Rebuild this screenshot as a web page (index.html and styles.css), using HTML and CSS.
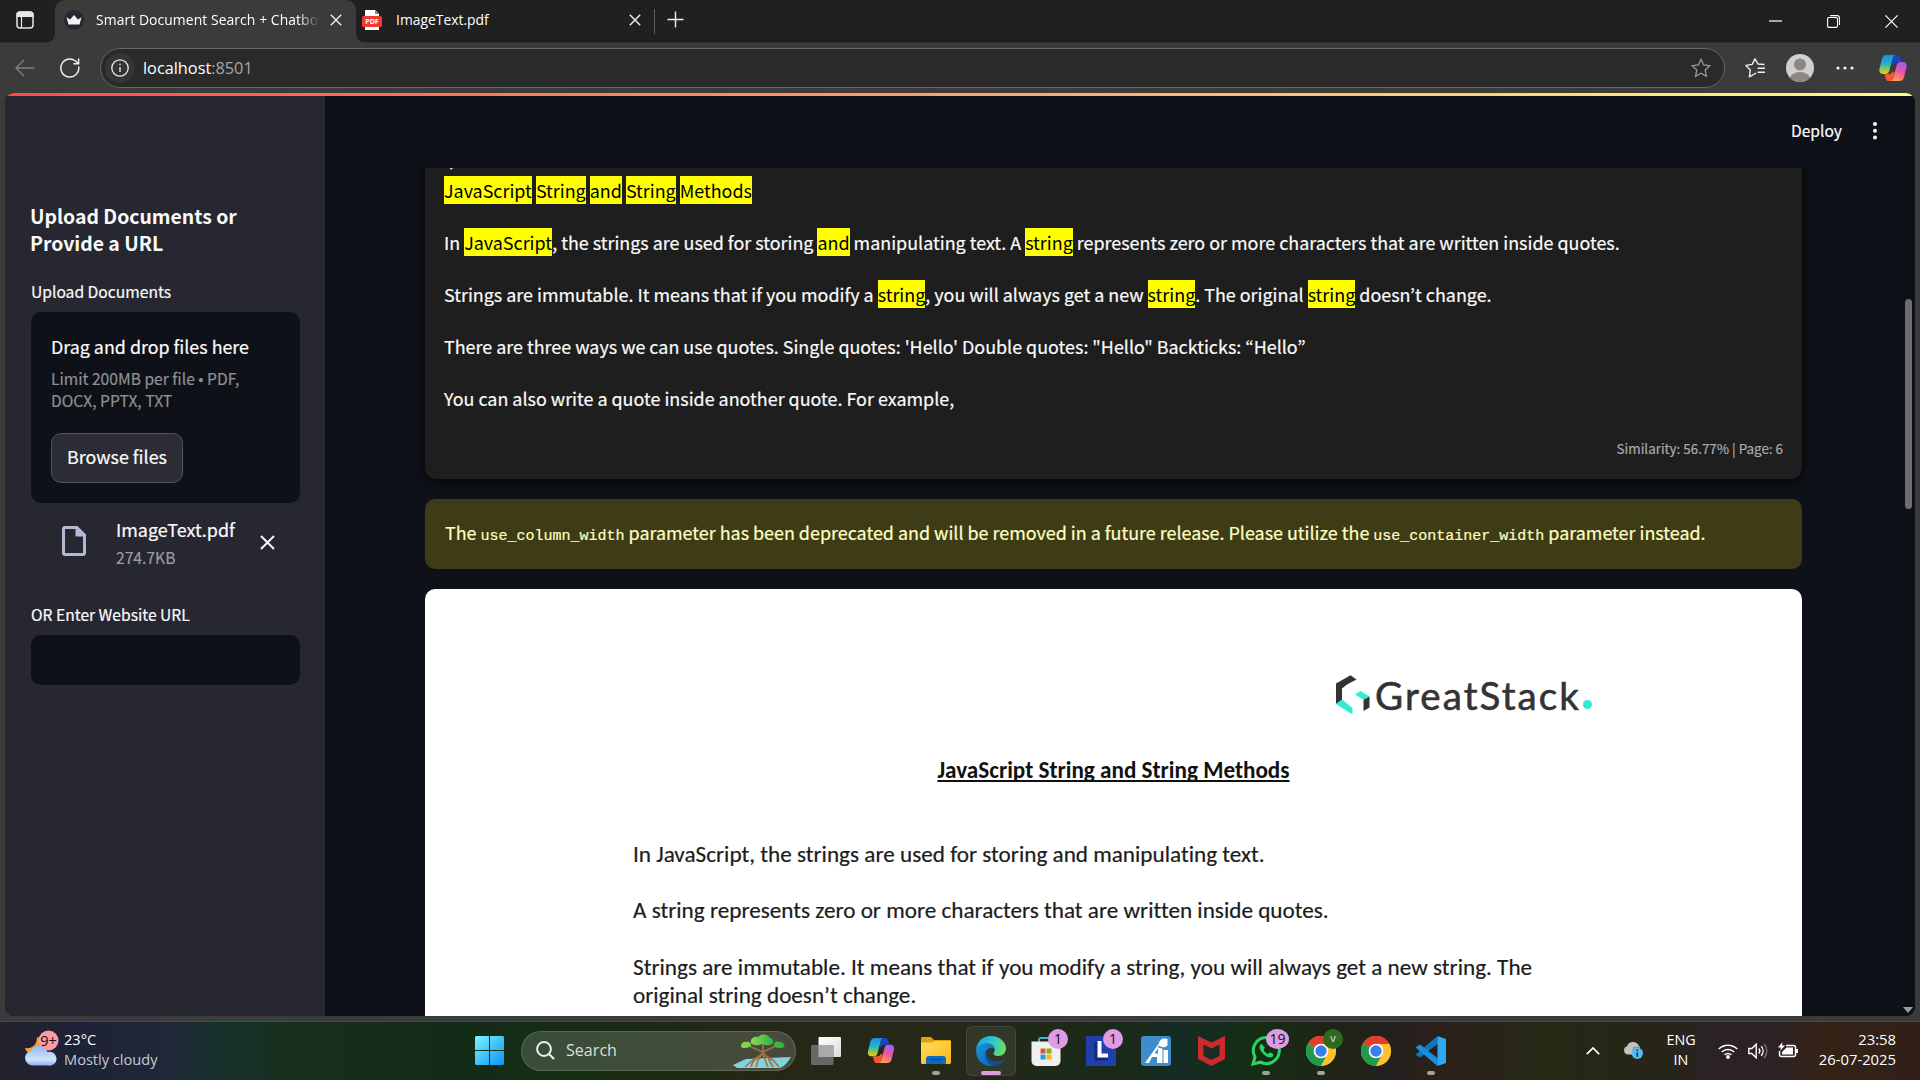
FILE: index.html
```
<!DOCTYPE html>
<html lang="en">
<head>
<meta charset="utf-8">
<title>Smart Document Search + Chatbot</title>
<link rel="stylesheet" href="styles.css">
</head>
<body>
<svg class="defs" aria-hidden="true">
  <defs>
    <linearGradient id="cpA" x1="0" y1="0" x2="0" y2="1"><stop offset="0" stop-color="#1b8fe6"/><stop offset=".45" stop-color="#22b2c8"/><stop offset=".72" stop-color="#7cc95a"/><stop offset="1" stop-color="#f9c80e"/></linearGradient>
    <linearGradient id="cpB" x1=".7" y1="0" x2=".3" y2="1"><stop offset="0" stop-color="#a259ff"/><stop offset=".5" stop-color="#f0569a"/><stop offset="1" stop-color="#ffa04d"/></linearGradient>
    <linearGradient id="winG" x1="0" y1="0" x2="1" y2="1"><stop offset="0" stop-color="#7df3ff"/><stop offset="1" stop-color="#0a93f7"/></linearGradient>
    <linearGradient id="folderG" x1="0" y1="0" x2="1" y2="1"><stop offset="0" stop-color="#ffdb62"/><stop offset="1" stop-color="#f9b814"/></linearGradient>
    <linearGradient id="edgeTop" x1="0" y1=".3" x2="1" y2=".5"><stop offset="0" stop-color="#1fa7dc"/><stop offset=".5" stop-color="#2cc3d6"/><stop offset="1" stop-color="#6be05b"/></linearGradient>
    <linearGradient id="edgeLow" x1="0" y1="0" x2="1" y2="1"><stop offset="0" stop-color="#1593e0"/><stop offset="1" stop-color="#0c62b5"/></linearGradient>
    <linearGradient id="cloudG" x1="0" y1="0" x2="0" y2="1"><stop offset="0" stop-color="#8fb8f6"/><stop offset=".7" stop-color="#d5e3fb"/><stop offset="1" stop-color="#86aef2"/></linearGradient>
    <linearGradient id="leafG" x1="0" y1="0" x2="1" y2="0"><stop offset="0" stop-color="#8ed84f"/><stop offset="1" stop-color="#2fae45"/></linearGradient>
    <linearGradient id="viewG" x1="0" y1="0" x2="1" y2="1"><stop offset="0" stop-color="#fff"/><stop offset="1" stop-color="#dcdcdc"/></linearGradient>
    <symbol id="copilot" viewBox="0 0 28 26">
      <path d="M15 0h3.400c1.500 0 2.400.8 2.800 2.100L22.600 7h-4.500c-2 0-3.300 1-3.900 3L12.500 8z" fill="#1246c4"/>
      <path d="M13 26H9.600c-1.500 0-2.400-.8-2.800-2.100L5.400 19h4.500c2 0 3.300-1 3.900-3l1.700 2z" fill="#f4562f"/>
      <path d="M7.500 0h8.800c-1.500.6-2.200 1.800-2.700 3.600l-3.200 12c-.6 2.200-1.700 3.400-4 3.400H4C1 19-.2 16.800.5 13.800L2.800 4.500C3.500 1.500 5 0 7.500 0z" fill="url(#cpA)"/>
      <path d="M20.500 26h-8.800c1.500-.6 2.200-1.800 2.700-3.600l3.200-12c.6-2.200 1.700-3.400 4-3.400H24c3 0 4.200 2.200 3.500 5.200l-2.300 9.300c-.7 3-2.200 4.500-4.700 4.500z" fill="url(#cpB)"/>
    </symbol>
    <symbol id="cross" viewBox="0 0 12 12"><path d="M.8.8l10.400 10.400M11.200.8L.8 11.200" stroke="currentColor" stroke-width="1.400" fill="none"/></symbol>
    <symbol id="chrome" viewBox="0 0 30 30">
      <circle cx="15" cy="15" r="15" fill="#fdc02f"/>
      <path d="M15 15L2 7.500A15 15 0 0 1 28 7.500z" fill="#e33b2e"/>
      <path d="M2 7.500A15 15 0 0 0 15 30l6.500-11.200L15 15z" fill="#219a4d"/>
      <path d="M15 8h13.200A15 15 0 0 1 15 30l6-11.500z" fill="#fdc02f"/>
      <circle cx="15" cy="15" r="7.300" fill="#fff"/><circle cx="15" cy="15" r="5.700" fill="#3b7ded"/>
    </symbol>
  </defs>
</svg>

<header class="tabstrip">
  <svg class="tab-actions" viewBox="0 0 18 18"><rect x="1" y="1" width="16" height="16" rx="3" fill="none" stroke="#e6e6e6" stroke-width="1.500"/><path d="M1 5V3.500A2.500 2.500 0 0 1 3.500 1h11A2.500 2.500 0 0 1 17 3.500V5.500H1zM5.500 5v12" fill="#e6e6e6" stroke="#e6e6e6" stroke-width="1.200"/></svg>
  <div class="tab tab-active">
    <svg class="favicon" viewBox="0 0 20 20"><circle cx="10" cy="10" r="10" fill="#262730"/><path d="M2.500 7.200L6 9.600 10 5l4 4.600 3.500-2.400-2 7.300h-11z" fill="#f2f2f2"/></svg>
    <span class="tab-title fade">Smart Document Search + Chatbot</span>
    <svg class="x"><use href="#cross"/></svg>
  </div>
  <div class="tab tab-idle">
    <svg class="favicon" viewBox="0 0 20 20"><path d="M3 0h10l4 4v16H3z" fill="#fff"/><path d="M13 0l4 4h-4z" fill="#888"/><rect x="0" y="6" width="20" height="11" rx="1.500" fill="#f03a37"/><text x="10" y="14" text-anchor="middle" class="pdf-label">PDF</text></svg>
    <span class="tab-title">ImageText.pdf</span>
    <svg class="x"><use href="#cross"/></svg>
  </div>
  <i class="tab-sep"></i>
  <svg class="plus" viewBox="0 0 18 18"><path d="M9 .5v17M.5 9h17" stroke="#f0f0f0" stroke-width="1.500"/></svg>
  <div class="win-buttons">
    <svg viewBox="0 0 13 13"><path d="M0 6h13" stroke="#fff" stroke-width="1.200"/></svg>
    <svg viewBox="0 0 13 13"><path d="M.6 3.800a1.300 1.300 0 0 1 1.300-1.300h7.300a1.300 1.300 0 0 1 1.300 1.300v7.300a1.300 1.300 0 0 1-1.300 1.300H1.900A1.300 1.300 0 0 1 .6 11.100zM3 .6h7.400a2 2 0 0 1 2 2V10" fill="none" stroke="#fff" stroke-width="1.100"/></svg>
    <svg viewBox="0 0 13 13"><path d="M.4.4l12.200 12.200M12.600.4L.4 12.600" stroke="#fff" stroke-width="1.200"/></svg>
  </div>
</header>

<nav class="toolbar">
  <svg class="back" viewBox="0 0 20 18"><path d="M19.500 9H1M9 1L1 9l8 8" fill="none" stroke="#7f7f7f" stroke-width="1.400"/></svg>
  <svg class="reload" viewBox="0 0 20 20"><path d="M18.700 8.500A9 9 0 1 1 15.500 3l2.500 2" fill="none" stroke="#efefef" stroke-width="1.500"/><path d="M18.600.5v5.200h-5.200" fill="none" stroke="#efefef" stroke-width="1.500"/></svg>
  <div class="address">
    <span class="info"><svg viewBox="0 0 18 18"><circle cx="9" cy="9" r="8.200" fill="none" stroke="#e8e8e8" stroke-width="1.300"/><path d="M9 8v5M9 4.800v1.500" stroke="#e8e8e8" stroke-width="1.400"/></svg></span>
    <span class="url">localhost<span class="port">:8501</span></span>
    <svg class="star" viewBox="0 0 20 20"><path d="M10 1.200l2.600 5.700 6.200.8-4.600 4.200 1.200 6.300L10 15.200l-5.400 3 1.200-6.300L1.200 7.700l6.200-.8z" fill="none" stroke="#9a9a9a" stroke-width="1.300"/></svg>
  </div>
  <svg class="favs" viewBox="0 0 20 20"><path d="M19.500 6.500l-6.600-.5L10 .8 7.200 6.400.9 7.400l4.400 4.500-.9 6.900 5-2.800 1.600-.9M12.500 10.200H20M12.500 14.200H20" fill="none" stroke="#efefef" stroke-width="1.400" stroke-linejoin="round"/></svg>
  <svg class="avatar" viewBox="0 0 28 28"><clipPath id="av"><circle cx="14" cy="14" r="14"/></clipPath><g clip-path="url(#av)"><rect width="28" height="28" fill="#d2d0ce"/><circle cx="14" cy="10.500" r="6" fill="#8b8785"/><ellipse cx="14" cy="25.500" rx="10.500" ry="7.500" fill="#8b8785"/></g></svg>
  <svg class="more" viewBox="0 0 18 4"><circle cx="2" cy="2" r="1.600" fill="#f2f2f2"/><circle cx="9" cy="2" r="1.600" fill="#f2f2f2"/><circle cx="16" cy="2" r="1.600" fill="#f2f2f2"/></svg>
  <svg class="cop"><use href="#copilot"/></svg>
</nav>

<div class="viewport">
  <div class="decoration"></div>
  <div class="app">
    <aside class="sidebar">
      <h2>Upload Documents or Provide a URL</h2>
      <label class="lbl">Upload Documents</label>
      <section class="dropzone">
        <div class="dz-title">Drag and drop files here</div>
        <div class="dz-hint">Limit 200MB per file • PDF, DOCX, PPTX, TXT</div>
        <button class="browse">Browse files</button>
      </section>
      <div class="file">
        <svg class="file-icon" viewBox="0 0 24 30"><path d="M3 0h12.500L24 8.500V27a3 3 0 0 1-3 3H3a3 3 0 0 1-3-3V3a3 3 0 0 1 3-3zm0 3v24h18V10.500h-7.500V3z" fill="#b5b8d0"/></svg>
        <div class="file-text"><div class="file-name">ImageText.pdf</div><div class="file-size">274.7KB</div></div>
        <svg class="file-x" viewBox="0 0 15 15"><path d="M1 1l13 13M14 1L1 14" stroke="#fafafa" stroke-width="2"/></svg>
      </div>
      <label class="lbl">OR Enter Website URL</label>
      <div class="input"></div>
    </aside>
    <main class="main">
      <div class="app-header"><span>Deploy</span><svg viewBox="0 0 4 18"><circle cx="2" cy="2" r="2" fill="#fafafa"/><circle cx="2" cy="8.800" r="2" fill="#fafafa"/><circle cx="2" cy="15.500" r="2" fill="#fafafa"/></svg></div>
      <div class="scroll">
        <article class="card">
          <p>I,<br><mark>JavaScript</mark> <mark>String</mark> <mark>and</mark> <mark>String</mark> <mark>Methods</mark></p>
          <p>In <mark>JavaScript</mark>, the strings are used for storing <mark>and</mark> manipulating text. A <mark>string</mark> represents zero or more characters that are written inside quotes.</p>
          <p>Strings are immutable. It means that if you modify a <mark>string</mark>, you will always get a new <mark>string</mark>. The original <mark>string</mark> doesn’t change.</p>
          <p>There are three ways we can use quotes. Single quotes: 'Hello' Double quotes: "Hello" Backticks: “Hello”</p>
          <p>You can also write a quote inside another quote. For example,</p>
          <div class="score">Similarity: 56.77% | Page: 6</div>
        </article>
        <div class="warning">The <code>use_column_width</code> parameter has been deprecated and will be removed in a future release. Please utilize the <code>use_container_width</code> parameter instead.</div>
        <div class="page">
          <div class="logo">
            <svg viewBox="0 0 35 40"><path d="M15.500.3l6 4.200-9.500 5-5 4v11.500L1 29V8.500z" fill="#333"/><path d="M1 29l6-4.500 10.500 8.500v6.500z" fill="#2fedd2"/><path d="M20 19.500l5.500-3.500 9 5.500-5.500 3.500z" fill="#2fedd2"/><path d="M34.500 21.500v11l-6 3.500V25z" fill="#333"/></svg>
            <span class="logo-text">GreatStack</span><i class="logo-dot"></i>
          </div>
          <h3>JavaScript String and String Methods</h3>
          <p>In JavaScript, the strings are used for storing and manipulating text.</p>
          <p>A string represents zero or more characters that are written inside quotes.</p>
          <p>Strings are immutable. It means that if you modify a string, you will always get a new string. The<br>original string doesn’t change.</p>
        </div>
      </div>
    </main>
    <div class="scrollbar"><i class="thumb"></i><i class="arrow"></i></div>
  </div>
</div>

<footer class="taskbar">
  <div class="weather">
    <svg viewBox="0 0 36 36"><path d="M13 7c0 8-5 12-12 11 1 4 5 7 11 6l8-4V10z" fill="#f0a02c"/><path d="M8 35.500a7.500 7.500 0 0 1-1-14.800A9 9 0 0 1 23.500 22 7 7 0 1 1 24 35.500z" fill="url(#cloudG)"/><circle cx="24.500" cy="10.500" r="10" fill="#ff99a4"/><text x="24.500" y="15.500" text-anchor="middle" class="badge-text">9+</text></svg>
    <div><div class="temp">23°C</div><div class="cond">Mostly cloudy</div></div>
  </div>
  <div class="dock">
    <div class="cell"><svg width="29" height="29" viewBox="0 0 29 29"><path d="M1 0h13v14H0V1zM15 0h13l1 1v13H15zM0 15h14v14H1l-1-1zM15 15h14v13l-1 1H15z" fill="url(#winG)"/></svg></div>
    <div class="search">
      <svg width="19" height="19" viewBox="0 0 19 19"><circle cx="8" cy="8" r="6.900" fill="none" stroke="#eceeec" stroke-width="2"/><path d="M13 13l5 5" stroke="#eceeec" stroke-width="2.200"/></svg>
      <span>Search</span>
      <svg class="tree" width="58" height="34" viewBox="0 0 58 34"><path d="M13 25L58 23c-3 5-6 9-11 11H4l-4-3z" fill="#7fd4e0"/><path d="M30 8v9c0 4-6 6-10 9l-8 7M30 17c1 5 5 7 10 9l6 7M29 20c-3 4-5 8-6 13M30 20c1 4 3 8 5 13M18 13l12 5 13-6M25 24c-4 1-6 5-7 9M35 24l5 9" fill="none" stroke="#a8703f" stroke-width="1.600"/><path d="M18 8c-1-3 3-6 7-5 3-4 11-3 12 1 4 0 5 6 0 7-4 1-7-1-8-1-3 2-11 2-11-2z" fill="url(#leafG)"/><path d="M8 12c0-3 3-5 6-4 3-1 6 3 3 5-3 1-9 2-9-1zM41 11c0-3 3-5 5-3 3-1 7 3 5 5-3 2-10 1-10-2z" fill="url(#leafG)"/></svg>
    </div>
    <div class="cell"><svg width="30" height="28" viewBox="0 0 30 28"><rect x="7.500" width="22.500" height="20" rx="1" fill="url(#viewG)"/><rect y="8" width="22.500" height="20" rx="1.500" fill="#747474" opacity=".85"/><rect x="7.500" y="8" width="15" height="12" fill="#aaa"/></svg></div>
    <div class="cell"><svg width="28" height="25"><use href="#copilot"/></svg></div>
    <div class="cell"><svg width="30" height="27" viewBox="0 0 30 27"><path d="M0 1.500C0 .6.600 0 1.500 0H10l3 3h15.500c.9 0 1.500.6 1.500 1.500V9H0z" fill="#e0a008"/><path d="M0 5.500h11L13.500 4H30v21.500c0 .9-.6 1.500-1.500 1.500h-27C.6 27 0 26.400 0 25.500z" fill="url(#folderG)"/><path d="M5 27v-5c0-2 1-3 3-3h14c2 0 3 1 3 3v5z" fill="#0b6cc4"/><path d="M9 22.500h12" stroke="#0a4d92" stroke-width="1.200"/></svg><i class="run"></i></div>
    <div class="cell active"><svg width="30" height="30" viewBox="0 0 30 30"><path d="M15 0c8.500 0 15 6 15 12.500 0 4.500-3.500 7.500-7.500 7.500-3.500 0-5-1.300-5-2.600 0-.9 1.200-1.500 1.200-3.800C18.700 10.500 15.500 7.500 11 7.500 5 7.500 1 11.500.2 14.500 0 6 7 0 15 0z" fill="url(#edgeTop)"/><path d="M.1 15C.5 10.500 5 7.400 10.500 7.400c4 0 7.800 2.500 8.200 5.700-1-.8-2.200-1.300-3.500-1.200C11 12.200 9 15.500 9.500 19c.6 5 5 9.500 10.500 9.300-1.600 1-3.400 1.600-5.400 1.700C6 30 0 23 .1 15z" fill="url(#edgeLow)"/><path d="M12 14.500c-3 5 1.500 11 8 11 3 0 5.500-1 7.500-2.300.6-.3 1 .2.700.7-2 3.300-5 5.300-8.700 5.900C12 30.500 6.500 20 12 14.500z" fill="#114f93"/></svg><i class="run on"></i></div>
    <div class="cell"><svg width="30" height="30" viewBox="0 0 30 30"><path d="M8 7V3.500C8 2.500 8.600 2 9.500 2h11c1 0 1.500.5 1.500 1.500V7" fill="none" stroke="#35b5ea" stroke-width="1.800"/><path d="M.5 5.500h29V25a5 5 0 0 1-5 5h-19a5 5 0 0 1-5-5z" fill="#f0f0f0"/><path d="M9.500 12.500h5v5h-5z" fill="#e8502f"/><path d="M15.500 12.500h5v5h-5z" fill="#7ab51d"/><path d="M9.500 18.500h5v5h-5z" fill="#1ba1e8"/><path d="M15.500 18.500h5v5h-5z" fill="#f9b70b"/></svg><b class="badge">1</b></div>
    <div class="cell"><svg width="30" height="30" viewBox="0 0 30 30"><path d="M0 0h30v30H0z" fill="#1f3fad"/><path d="M11 6v16h11" fill="none" stroke="#132a7a" stroke-width="5"/><path d="M13.500 5v14.500H22" fill="none" stroke="#fff" stroke-width="4"/></svg><b class="badge">1</b></div>
    <div class="cell"><svg width="30" height="30" viewBox="0 0 30 30"><rect width="30" height="30" rx="3" fill="#3f8ccc"/><path d="M4 27L17.500 8c1-3.500 3-5.500 5.500-5.500L26.500 3v6.500l-5 3V27H16v-6h-5l-3 6zM13.500 17.500H17v-5z" fill="#fff"/><path d="M22.500 14h4.500v13h-4.500z" fill="#fff"/><path d="M17 10.500l9.500 3" stroke="#3f8ccc" stroke-width="1.500"/></svg></div>
    <div class="cell"><svg width="27" height="30" viewBox="0 0 27 30"><path d="M0 0l13.500 6.500L27 0v23l-13.500 7L0 23z" fill="#ca2b2c"/><path d="M5.500 8.500l8 4 8-4v11.200l-8 4.300-8-4.300z" fill="#1a2b22"/></svg></div>
    <div class="cell"><svg width="30" height="30" viewBox="0 0 30 30"><path d="M2 28l2-7A13 13 0 1 1 9.500 26.200z" fill="none" stroke="#29d366" stroke-width="3"/><path d="M10.800 8c-3.500 1.500-2.800 5.500.7 9.200 3.500 3.700 8 5.600 10 3.600 1.200-1.200 1-2.500.6-2.900l-3-1.700-2 1.800c-2-.8-3.800-2.500-4.500-4.300l1.300-1.900z" fill="#29d366"/></svg><b class="badge wide">19</b><i class="run"></i></div>
    <div class="cell"><svg width="30" height="30"><use href="#chrome"/></svg><b class="badge green">v</b><i class="run"></i></div>
    <div class="cell"><svg width="30" height="30"><use href="#chrome"/></svg></div>
    <div class="cell"><svg width="30" height="30" viewBox="0 0 30 30"><path d="M22 7.500L4 21.500l-3.500-2c-.6-.5-.6-1.300 0-1.800L21.500 0z" fill="#1177bb"/><path d="M22 22.500L4 8.500l-3.500 2c-.6.500-.6 1.300 0 1.800L21.500 30z" fill="#1b8fdb"/><path d="M21.500 0L30 3v24l-8.500 3z" fill="#2fa9f3"/></svg><i class="run"></i></div>
  </div>
  <div class="tray">
    <svg class="chev" viewBox="0 0 14 8"><path d="M.8 7.200L7 1l6.200 6.200" fill="none" stroke="#fff" stroke-width="1.700"/></svg>
    <svg class="drive" viewBox="0 0 20 17"><path d="M4.500 12.500A4.300 4.300 0 0 1 4 4.200 6.500 6.500 0 0 1 16 4l1 8.500z" fill="#c3c3bd"/><path d="M10 5l7-1v8h-8z" fill="#8e8f89"/><circle cx="14.300" cy="11.200" r="5.700" fill="#52bdf5"/><path d="M14.300 10.200v4.500M14.300 7.500v1.600" stroke="#12303f" stroke-width="1.600"/></svg>
    <div class="lang"><div>ENG</div><div>IN</div></div>
    <svg class="wifi" viewBox="0 0 20 16"><path d="M.8 6a13 13 0 0 1 18.400 0M3.800 9a8.800 8.800 0 0 1 12.400 0M6.600 11.800a4.800 4.800 0 0 1 6.800 0" fill="none" stroke="#fff" stroke-width="1.500"/><circle cx="10" cy="14" r="1.900" fill="#fff"/></svg>
    <svg class="vol" viewBox="0 0 20 16"><path d="M.8 5.500h3L8.200 1.200v13.600L3.800 10.500h-3z" fill="none" stroke="#fff" stroke-width="1.400"/><path d="M10.800 5.500c1.300 1.500 1.300 3.500 0 5M13.200 3.200c2.500 2.800 2.500 6.800 0 9.600" fill="none" stroke="#fff" stroke-width="1.400"/><path d="M16 1c3.800 4 3.800 10 0 14" fill="none" stroke="#777" stroke-width="1.400"/></svg>
    <svg class="bat" viewBox="0 0 20 16"><path d="M8 3.500h7.500a2 2 0 0 1 2 2v7a2 2 0 0 1-2 2h-12a2 2 0 0 1-2-2V9" fill="none" stroke="#fff" stroke-width="1.500"/><path d="M8.500 5.500H15v7H4V10z" fill="#fff"/><path d="M18 7h2v4h-2zM4.500 0L0 5.500h3L2 9l5-5.500H4z" fill="#fff"/></svg>
    <div class="clock"><div>23:58</div><div>26-07-2025</div></div>
  </div>
</footer>
</body>
</html>
```
FILE: styles.css
```
* { box-sizing: border-box; }
:root {
  --ui: "Open Sans", "Noto Sans", sans-serif;
  --app: "Noto Sans CJK KR", "Noto Sans CJK SC", sans-serif;
}
body {
  margin: 0; width: 1920px; height: 1080px; overflow: hidden;
  display: flex; flex-direction: column; background: #3b3b3b;
  font-family: var(--ui); color: #fff;
}
svg { display: block; flex: none; }
.defs { position: absolute; width: 0; height: 0; }

/* browser tabs */
.tabstrip { height: 43px; flex: none; display: flex; align-items: center; background: #202020; padding-left: 16px; border-bottom: 1px solid #303030; }
.tab-actions { width: 18px; height: 18px; margin: -2px 20px 0 0; }
.tab { display: flex; align-items: center; height: 43px; margin-bottom: -1px; padding-bottom: 4px; font-size: 13.9px; }
.tab-active { position: relative; width: 301px; background: #3b3b3b; border-radius: 10px 10px 0 0; padding-left: 9px; margin-left: 1px; }
.tab-active::before, .tab-active::after { content: ""; position: absolute; bottom: 0; width: 9px; height: 9px; }
.tab-active::before { left: -9px; background: radial-gradient(circle at 0 0, transparent 8.500px, #3b3b3b 9px); }
.tab-active::after { right: -9px; background: radial-gradient(circle at 100% 0, transparent 8.500px, #3b3b3b 9px); }
.favicon { width: 20px; height: 20px; }
.pdf-label { font: 700 7px var(--ui); fill: #fff; }
.tab-title { margin-left: 12px; white-space: nowrap; overflow: hidden; }
.fade { width: 223px; letter-spacing: .08px; -webkit-mask-image: linear-gradient(90deg, #000 202px, transparent 223px); mask-image: linear-gradient(90deg, #000 202px, transparent 223px); }
.x { width: 12px; height: 12px; color: #f0f0f0; }
.tab-active .x { margin-left: 11px; }
.tab-idle { width: 299px; padding-left: 6px; }
.tab-idle .tab-title { margin-left: 14px; width: 233px; }
.tab-sep { width: 1px; height: 25px; margin-left: -1px; background: #5c5c5c; }
.plus { width: 17px; height: 17px; margin: -3px 0 0 12px; }
.win-buttons { margin-left: auto; display: flex; gap: 45px; padding-right: 22px; }
.win-buttons svg { width: 13px; height: 13px; }

/* toolbar */
.toolbar { height: 50px; flex: none; display: flex; align-items: center; padding-left: 15px; }
.back { width: 20px; height: 18px; }
.reload { width: 20px; height: 20px; margin: 0 20px 0 25px; }
.address { width: 1625px; height: 40px; border: 1px solid #666; border-radius: 20px; background: #2a2a2a; display: flex; align-items: center; padding: 0 13px 0 4px; }
.info { width: 30px; height: 30px; border-radius: 50%; background: #353535; display: grid; place-items: center; }
.info svg { width: 18px; height: 18px; }
.url { margin-left: 8px; font-size: 16.3px; }
.port { color: #a6a6a6; }
.star { width: 20px; height: 20px; margin-left: auto; }
.favs { width: 20px; height: 20px; margin-left: 20px; }
.avatar { width: 28px; height: 28px; margin-left: 21px; }
.more { width: 18px; height: 4px; margin-left: 22px; }
.cop { width: 28px; height: 26px; margin-left: 25px; }

/* page viewport */
.viewport { width: 1910px; height: 923px; flex: none; margin-left: 5px; border-radius: 9px; overflow: hidden; display: flex; flex-direction: column; background: #0e1117; font-family: var(--app); color: #fafafa; -webkit-text-stroke: .2px; }
.decoration { height: 3px; flex: none; background: linear-gradient(90deg, #ff4b4b, #fffd80); }
.app { flex: 1; min-height: 0; display: flex; }
.sidebar { width: 320px; background: #262730; padding: 106px 25px 0 26px; }
.sidebar h2 { margin: 0 0 0 -1px; font-size: 19.4px; line-height: 27px; font-weight: 700; width: 230px; -webkit-text-stroke: 0; }
.lbl { display: block; font-size: 15.63px; line-height: 24px; margin-top: 24px; }
.dropzone { margin-top: 8px; height: 191px; background: #0e1117; border-radius: 10px; padding: 18px 20px; }
.dz-title { font-size: 17.87px; line-height: 32px; }
.dz-hint { font-size: 15.63px; line-height: 22px; color: #8f9094; margin-top: 6px; }
.browse { display: block; margin: 21px 0 0; width: 132px; height: 50px; border: 1px solid #52535c; border-radius: 10px; background: #2b2c36; color: #fafafa; font: 17.87px/1 var(--app); padding: 0 0 2px; text-align: center; -webkit-text-stroke: .2px; }
.file { display: flex; align-items: center; height: 77px; padding-left: 31px; }
.file-icon { width: 24px; height: 30px; margin-top: -1px; }
.file-text { margin-left: 30px; width: 144px; }
.file-name { font-size: 17.95px; line-height: 29px; }
.file-size { font-size: 15.63px; line-height: 25px; color: #9b9ca1; padding-top: 1px; margin-bottom: -1px; }
.file-x { width: 15px; height: 15px; margin-top: 2px; }
.file + .lbl { margin-top: 23px; }
.input { margin-top: 8px; height: 50px; border-radius: 10px; background: #0e1117; }

.main { flex: 1; display: flex; flex-direction: column; min-width: 0; }
.app-header { height: 72px; flex: none; display: flex; align-items: center; justify-content: flex-end; gap: 31px; padding: 0 38px 3px 0; font-size: 15.63px; }
.app-header svg { width: 4px; height: 18px; }
.scroll { flex: 1; min-height: 0; overflow: hidden; padding: 0 113px 0 100px; }
.card { margin-top: -26px; height: 337px; background: #1e1e1e; border-radius: 12px; box-shadow: 0 2px 12px rgba(0,0,0,.75); padding: 0 19px; font-size: 17.91px; line-height: 32px; }
.card p { margin: 0 0 20px; white-space: nowrap; }
mark { background: #ff0; color: #000; padding: 1px 0 .5px; -webkit-text-stroke: 0; }
.score { text-align: right; font-size: 13.4px; line-height: 20px; color: #aaa; margin-top: 24px; }
.warning { margin-top: 20px; height: 70px; border-radius: 10px; background: #3e3b17; color: #ffffc2; padding: 0 20px; font-size: 17.91px; line-height: 67px; white-space: nowrap; }
.warning code { font: 15px "Liberation Mono", monospace; }
.page { margin-top: 20px; height: 600px; border-radius: 10px 10px 0 0; background: #fff; color: #1c1c1c; padding: 84px 208px 0; font: 23.18px/28px Carlito, Calibri, Lato, sans-serif; font-variant-ligatures: none; }
.logo { display: flex; align-items: center; height: 44px; padding-left: 702px; color: #333; }
.logo svg { width: 35px; height: 40px; }
.logo-text { font: 38.5px/44px Lato, sans-serif; letter-spacing: 2.1px; margin-left: 5px; -webkit-text-stroke: .6px #333; }
.logo-dot { width: 9px; height: 9px; border-radius: 50%; background: #2fedd2; margin: 19px 0 0 2px; }
.page h3 { margin: 39px 0 56px; text-align: center; font-size: 23.18px; line-height: 28px; font-weight: 700; text-decoration: underline; text-decoration-thickness: 2px; text-underline-offset: 2px; text-decoration-skip-ink: none; color: #111; -webkit-text-stroke: 0; }
.page p { margin: 0 0 28px; white-space: nowrap; line-height: 28.3px; }

.scrollbar { width: 15px; position: relative; margin-left: -15px; background: #0e1117; }
.thumb { position: absolute; left: 5px; top: 203px; width: 7px; height: 210px; border-radius: 4px; background: #6c6d70; }
.arrow { position: absolute; left: 3px; bottom: 3px; border: 5px solid transparent; border-top: 6px solid #9b9b9b; border-bottom: 0; }

/* taskbar */
.taskbar {
  height: 59px; margin-top: 5px; flex: none; position: relative; border-top: 1px solid #484a49; padding-bottom: 1px;
  background: linear-gradient(90deg, #23222d 0, #1e2238 80px, #20273a 160px, #18302d 215px, #17301c 300px, #132c18 440px, #172c12 600px, #1f2a14 700px, #272717 800px, #252818 960px, #1a2a18 1120px, #142c24 1180px, #152e14 1260px, #1e2416 1330px, #24201f 1390px, #2c211b 1450px, #252915 1540px, #272518 1660px, #2b2227 1720px, #2d2123 1780px, #352317 1820px, #302018 1920px);
  display: flex; align-items: center; justify-content: space-between;
}
.weather { display: flex; align-items: center; width: 464px; padding-left: 25px; font-size: 14.6px; line-height: 20px; }
.weather svg { width: 36px; height: 36px; margin: -6px 4px 0 -1px; }
.badge-text { font: 14.5px var(--ui); fill: #111; }
.weather > div { margin-top: -3px; }
.cond { color: #c8cad0; }
.dock { display: flex; align-items: center; gap: 5px; flex: 1; }
.cell { width: 50px; height: 50px; border-radius: 6px; display: grid; place-items: center; position: relative; border: 1px solid transparent; }
.active { background: rgba(255,255,255,.07); border-color: rgba(255,255,255,.08); }
.run { position: absolute; bottom: 0; left: 20px; width: 8px; height: 4px; border-radius: 2px; background: #a0a39c; }
.run.on { left: 14px; width: 20px; background: #df9be4; }
.badge { position: absolute; left: 26px; top: 2px; width: 20px; height: 20px; border-radius: 50%; background: #df9be4; color: #111; font: 400 14px/20px var(--ui); text-align: center; }
.badge.wide { left: 24px; width: 23px; }
.badge.green { background: #2f6b1e; color: #dfe8dc; font-size: 11px; line-height: 18px; }
.search { width: 275px; height: 40px; margin: 0 1px 0 2px; border-radius: 20px; background: rgba(255,255,255,.16); border: 1px solid rgba(255,255,255,.14); display: flex; align-items: center; padding-left: 14px; font-size: 16.1px; color: #dcdfdc; }
.search + .cell { margin-left: -1px; }
.search span { margin: -1px 0 0 11px; }
.tree { margin-left: auto; margin-right: 4px; }
.tray { display: flex; align-items: center; padding-right: 24px; font-size: 14.8px; line-height: 20px; }
.chev { width: 14px; height: 8px; }
.drive { width: 20px; height: 17px; margin-left: 23px; }
.lang { width: 36px; text-align: center; margin: -1px 0 0 20px; font-size: 14.3px; }
.wifi { width: 20px; height: 16px; margin-left: 19px; }
.vol { width: 20px; height: 16px; margin-left: 10px; }
.bat { width: 20px; height: 16px; margin: -2px 0 0 10px; }
.clock { width: 98px; text-align: right; margin-top: -3px; }
```
